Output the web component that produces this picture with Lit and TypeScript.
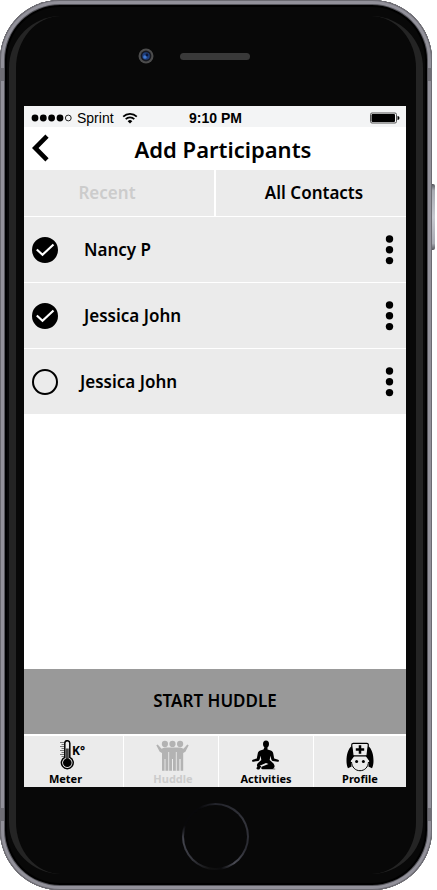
import { LitElement, html, css, svg, nothing } from "lit";
import { customElement, state } from "lit/decorators.js";
import { classMap } from "lit/directives/class-map.js";

interface Contact {
  name: string;
  selected: boolean;
}

const thermometerIcon = svg`
  <svg class="icon" viewBox="0 0 30 32" width="30" height="32" aria-hidden="true">
    <path d="M1 2.500h4.500M2.500 4.500h3M1 6.500h4.500M2.500 8.500h3M1 10.500h4.500M2.500 12.500h3M1 14.500h4.500M2.500 16.500h3" stroke="#777" stroke-width="1"/>
    <path d="M5.800 17.400V3.200a2.500 2.500 0 0 1 5 0V17.400a5.900 5.900 0 1 1-5 0z" fill="#ebebeb" stroke="#000" stroke-width="1.500"/>
    <path d="M8.300 20V8.500" stroke="#444" stroke-width="3"/>
    <circle cx="8.300" cy="22.800" r="4.300"/>
    <text x="13" y="15" class="kelvin">K°</text>
  </svg>`;

const peopleIcon = svg`
  <svg class="icon" viewBox="0 0 34 32" width="34" height="32" aria-hidden="true">
    <g fill="currentColor">
      <circle cx="8.900" cy="3.900" r="3.100"/><circle cx="16.500" cy="3.900" r="3.100"/><circle cx="24.100" cy="3.900" r="3.100"/>
      <path d="M.3 5.200L1.700 4.500l3.800 4.300 3 -1.200h16l3 1.200 3.800-4.300 1.400.7-3.300 6.600-2.200 1.200V30.800h-2.900V19h-.6v11.800H17V19h-.9v11.800H6V19 13l-2.300-1.200z"/>
    </g>
    <path d="M12.700 12v19M20.300 12v19M9 19v12M16.500 19v12M24 19v12" stroke="#ebebeb" stroke-width=".9"/>
  </svg>`;

const yogaIcon = svg`
  <svg class="icon" viewBox="0 0 28 32" width="28" height="32" aria-hidden="true" fill="currentColor">
    <ellipse cx="14" cy="4" rx="3" ry="3.500"/>
    <path d="M12.500 7h3v2.600l3.300.9c1.500.5 2.200 1.500 2.500 3.200l.9 4.700 4 1.300c1.400.7.8 2.300-.6 2l-4.800-.8c-1-.2-1.300-.7-1.500-1.600l-.9-3.600-.7 4.300 3.300 3c2.400 2.400 2 5.200-.6 5.800l2.600 0c.4.100.3.400 0 .4H10.500c-1.700-.3-1.600-2-.3-2.600l6.300-2.600-2.500-1-6.300 2.800 1.600.4-1.600 2.700c-.4.600-1 .7-2 .6-1.500-.2-1.700-1.900-.3-2.600-.9-1.600-.4-2.800.6-3.900l3.300-3-.7-4.300-.9 3.600c-.2.900-.5 1.400-1.500 1.600l-4.800.8c-1.400.3-2-1.300-.6-2l4-1.300.9-4.700c.3-1.700 1-2.700 2.500-3.200l3.300-.9z"/>
  </svg>`;

const nurseIcon = svg`
  <svg class="icon" viewBox="0 0 28 32" width="28" height="32" aria-hidden="true">
    <path d="M6.500 5.500C1.800 8.500.5 15 .5 21c0 3 .6 5.500 1.500 7.200L5.600 26.500 4.800 21 9 15h10l4.200 6-.8 5.500 3.600 1.700c.9-1.700 1.500-4.200 1.500-7.200 0-6-1.300-12.500-6-15.500z"/>
    <path d="M5.500 20.500c1.500-.6 2.600-2 3.300-4.200h10.400c.7 2.200 1.800 3.600 3.300 4.200 0 6-3.500 10.200-8.500 10.200s-8.500-4.200-8.500-10.200z" fill="#ebebeb"/>
    <path d="M5.500 22c.4 5.200 3.800 8.700 8.500 8.700s8.100-3.500 8.500-8.700" fill="none" stroke="#000" stroke-width="1"/>
    <path d="M5.700 5.200Q5.500 3.500 7.200 3.300h13.600q1.700.2 1.500 1.900L21 15.800H7z" fill="#ebebeb" stroke="#000" stroke-width="1.200"/>
    <path d="M14 5.300v8.400M9.800 9.500h8.400" stroke="#000" stroke-width="2.500"/>
    <circle cx="10.600" cy="21.500" r="1.500"/><circle cx="17.400" cy="21.500" r="1.500"/>
  </svg>`;

const tabs = [
  { label: "Meter", icon: thermometerIcon },
  { label: "Huddle", icon: peopleIcon },
  { label: "Activities", icon: yogaIcon },
  { label: "Profile", icon: nurseIcon },
];

@customElement("contact-row")
export class ContactRow extends LitElement {
  static properties = { contact: { attribute: false } };
  declare contact: Contact;

  static styles = css`
    :host {
      display: flex;
      align-items: center;
      height: 65px;
      padding: 0 8px;
      background: #ebebeb;
    }
    .pick {
      flex: 1;
      display: flex;
      align-items: center;
      gap: 26px;
      font-weight: 600;
    }
    .pick.open {
      gap: 22px;
    }
    .box {
      display: grid;
    }
    .box > * {
      grid-area: 1 / 1;
    }
    input {
      appearance: none;
      box-sizing: border-box;
      width: 26px;
      height: 26px;
      margin: 0;
      border: 2px solid #000;
      border-radius: 50%;
    }
    input:checked {
      background: #000;
    }
    .tick {
      pointer-events: none;
    }
    .more {
      display: flex;
      padding: 0;
      border: 0;
      background: none;
    }
  `;

  private toggle(e: Event) {
    this.contact = { ...this.contact, selected: (e.target as HTMLInputElement).checked };
  }

  render() {
    const { name, selected } = this.contact;
    return html`
      <label class=${classMap({ pick: true, open: !selected })}>
        <span class="box">
          <input type="checkbox" .checked=${selected} @change=${this.toggle} />
          ${selected
            ? html`<svg class="tick" viewBox="0 0 26 26" width="26" height="26" aria-hidden="true">
                <path d="M4.800 12.500l5.700 5.200L21.500 7.500" fill="none" stroke="#fff" stroke-width="2.200" />
              </svg>`
            : nothing}
        </span>
        <span>${name}</span>
      </label>
      <button class="more" aria-label="More options for ${name}">
        <svg viewBox="0 0 18 30" width="18" height="30" aria-hidden="true">
          <circle cx="9.500" cy="4" r="3.700" /><circle cx="9.500" cy="14.800" r="3.700" /><circle cx="9.500" cy="25.600" r="3.700" />
        </svg>
      </button>
    `;
  }
}

@customElement("app-root")
export class AppRoot extends LitElement {
  @state() private contacts: Contact[] = [
    { name: "Nancy P", selected: true },
    { name: "Jessica John", selected: true },
    { name: "Jessica John", selected: false },
  ];

  static styles = css`
    :host {
      display: block;
      background: #fff;
      color: #000;
      font: 17px/24px "Noto Sans", "Open Sans", sans-serif;
      overflow: hidden;
    }
    button {
      padding: 0;
      border: 0;
      color: inherit;
      font: inherit;
    }
    .phone {
      position: relative;
      box-sizing: border-box;
      display: flex;
      flex-direction: column;
      min-height: 100vh;
      margin-right: 5px;
      padding: 0 26px 0 24px;
      border-radius: 60px;
      background: #080808;
      box-shadow: inset 0 0 0 1px #6c6b72, inset 0 0 0 4px #92919a, inset 0 0 0 5px #55555b, inset 0 0 0 7px #000;
    }
    .glint {
      position: absolute;
      inset: 16px 9px;
      border: 0 solid #242424;
      border-width: 0 7px;
      border-radius: 52px;
      pointer-events: none;
    }
    .side-key {
      position: absolute;
      top: 184px;
      left: 100%;
      width: 3px;
      height: 66px;
      border-radius: 0 2px 2px 0;
      background: linear-gradient(#55555b, #a9abb3 10%, #c6c8cf 50%, #a9abb3 90%, #55555b);
    }
    .band {
      position: absolute;
      left: 0;
      right: 0;
      height: 13px;
      border: 0 solid #6f6e75;
      border-width: 0 4px;
    }
    .band.upper {
      top: 68px;
    }
    .band.lower {
      bottom: 69px;
    }
    .brow {
      height: 106px;
      display: grid;
      grid-template-columns: 1fr 70px 1fr;
      align-items: center;
      padding-top: 6px;
      box-sizing: border-box;
    }
    .camera {
      justify-self: end;
      margin-right: 26px;
    }
    .speaker {
      height: 7px;
      border-radius: 4px;
      background: #393939;
    }
    .screen {
      position: relative;
      flex: 1;
      display: flex;
      flex-direction: column;
      background: #fff;
    }
    .status {
      display: grid;
      grid-template-columns: 1fr auto 1fr;
      align-items: center;
      height: 21px;
      padding: 2px 6px 0 7px;
      box-sizing: border-box;
      background: #f3f4f5;
      font: 14px/18px "Liberation Sans", Arial, sans-serif;
    }
    .carrier {
      display: flex;
      align-items: center;
      gap: 5px;
    }
    .wifi {
      margin-left: 3px;
    }
    .time {
      font-weight: 700;
    }
    .battery {
      justify-self: end;
    }
    .nav {
      display: grid;
      grid-template-columns: 32px 1fr 16px;
      align-items: center;
      height: 43px;
    }
    .back {
      display: flex;
      padding-left: 8px;
      background: none;
    }
    h1 {
      margin: 0;
      text-align: center;
      font-size: 22px;
      font-weight: 600;
      line-height: 32px;
    }
    .segments {
      display: grid;
      grid-template-columns: 1fr 1fr;
      gap: 2px;
      height: 46px;
    }
    .segment {
      background: #ebebeb;
      font-weight: 600;
    }
    .segment.idle {
      color: #ccc;
      padding-right: 24px;
    }
    .segment.current {
      padding-left: 6px;
    }
    .list {
      flex: 1;
      display: flex;
      flex-direction: column;
      gap: 1px;
      padding-top: 1px;
    }
    .start {
      height: 65px;
      padding-bottom: 2px;
      background: #999;
      font-weight: 600;
    }
    .tabbar {
      display: grid;
      grid-template-columns: 99fr 94fr 94fr 92fr;
      gap: 1px;
      height: 51px;
      padding-top: 2px;
    }
    .tab {
      display: flex;
      flex-direction: column;
      align-items: center;
      padding-top: 4px;
      background: #ebebeb;
      color: #000;
      font-size: 11px;
      font-weight: 700;
      line-height: 14px;
      text-decoration: none;
    }
    .tab:first-child {
      padding-right: 16px;
    }
    .tab:first-child .icon {
      margin-left: 16px;
    }
    .tab.here {
      padding-left: 4px;
      color: #ccc;
    }
    .tab.here .icon {
      color: #b3b3b3;
    }
    .kelvin {
      font: 700 12px "Noto Sans", sans-serif;
    }
    .chin {
      display: flex;
      align-items: center;
      justify-content: center;
      height: 103px;
      box-sizing: border-box;
      padding-bottom: 4px;
    }
    .home {
      box-sizing: border-box;
      width: 67px;
      height: 67px;
      padding: 2px;
      border-radius: 50%;
      background: conic-gradient(from 0deg, #23242b, #33343b 60deg, #2a2b32 110deg, #4a4b54 145deg, #0c0c0e 170deg, #111 190deg, #33343b 225deg, #44454e 265deg, #08080a 290deg, #08080a 330deg, #23242b);
    }
    .home::before {
      content: "";
      display: block;
      height: 100%;
      border-radius: 50%;
      background: #080808;
    }
  `;

  render() {
    return html`
      <div class="phone">
        <span class="band upper"></span>
        <span class="band lower"></span>
        <span class="glint"></span>
        <span class="side-key"></span>
        <div class="brow">
          <svg class="camera" viewBox="0 0 16 16" width="16" height="16" aria-hidden="true">
            <circle cx="8" cy="8" r="7.500" fill="#4c4c4c" />
            <circle cx="8" cy="8" r="5.400" fill="#16181f" />
            <circle cx="8" cy="8" r="3.800" fill="#1f3f7c" />
            <circle cx="7" cy="9" r="1.800" fill="#3f78d0" />
            <circle cx="9" cy="7" r="1.400" fill="#0c1636" />
          </svg>
          <span class="speaker"></span>
        </div>
        <main class="screen">
          <div class="status">
            <span class="carrier">
              <svg viewBox="0 0 41 8" width="41" height="8" aria-hidden="true">
                <circle cx="4" cy="4" r="3.400" /><circle cx="12.300" cy="4" r="3.400" />
                <circle cx="20.600" cy="4" r="3.400" /><circle cx="29" cy="4" r="3.400" />
                <circle cx="37.300" cy="4" r="2.900" fill="none" stroke="#222" />
              </svg>
              Sprint
              <svg class="wifi" viewBox="0 0 16 12" width="16" height="12" aria-hidden="true" fill="none" stroke="#000" stroke-width="1.700">
                <path d="M1.200 4.600a9.600 9.600 0 0 1 13.600 0M3.700 7.200a6.100 6.100 0 0 1 8.600 0" />
                <path d="M8 11.500L5.700 9.200a3.300 3.300 0 0 1 4.600 0z" fill="#000" stroke="none" />
              </svg>
            </span>
            <span class="time">9:10 PM</span>
            <svg class="battery" viewBox="0 0 30 12" width="30" height="12" aria-hidden="true">
              <rect x="0.500" y="1" width="26" height="10" rx="1.500" fill="none" stroke="#555" />
              <rect x="1.500" y="2" width="23.500" height="8" rx="1" />
              <path d="M27.500 4q2 0 2 2t-2 2z" />
            </svg>
          </div>
          <header class="nav">
            <button class="back" aria-label="Back">
              <svg viewBox="0 0 17 30" width="17" height="30" aria-hidden="true">
                <path d="M15 2.200L3.200 14 15 25.800" fill="none" stroke="#000" stroke-width="4.600" />
              </svg>
            </button>
            <h1>Add Participants</h1>
          </header>
          <div class="segments">
            <button class="segment idle">Recent</button>
            <button class="segment current">All Contacts</button>
          </div>
          <div class="list">
            ${this.contacts.map((c) => html`<contact-row .contact=${c}></contact-row>`)}
          </div>
          <button class="start">START HUDDLE</button>
          <nav class="tabbar">
            ${tabs.map(
              (t) => html`<a
                href="#${t.label.toLowerCase()}"
                class=${classMap({ tab: true, here: t.label === "Huddle" })}
                >${t.icon}<span>${t.label}</span></a
              >`
            )}
          </nav>
        </main>
        <div class="chin"><button class="home" aria-label="Home"></button></div>
      </div>
    `;
  }
}
